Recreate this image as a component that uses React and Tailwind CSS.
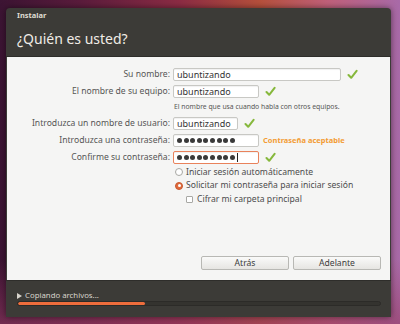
import React from "react";

const Check = () => (
  <svg width="11" height="11" viewBox="0 0 11 11" className="shrink-0">
    <path d="M1.5 6 L4.2 8.8 L9.6 1.8" fill="none" stroke="#86b83c" strokeWidth="2" strokeLinecap="round" strokeLinejoin="round" />
  </svg>
);

const Dots = ({ cursor }) => (
  <div className="flex items-center gap-[1.6px] pl-[3px]">
    {Array.from({ length: 9 }).map((_, i) => (
      <span key={i} className="block w-[5px] h-[5px] rounded-full bg-[#3a3a3a]" />
    ))}
    {cursor && <span className="block w-px h-[9px] bg-[#222] ml-[1px]" />}
  </div>
);

const Field = ({ w, children, active }) => (
  <div
    className={`h-[13px] ${w} rounded-[2px] border bg-white flex items-center ${
      active ? "border-[#e9825b]" : "border-[#c8c8c4]"
    } shadow-[inset_0_1px_1px_rgba(0,0,0,0.06)]`}
  >
    {children}
  </div>
);

const Txt = ({ children }) => (
  <span className="pl-[3px] text-[9px] text-[#333] leading-none">{children}</span>
);

const Row = ({ label, children }) => (
  <div className="flex items-center h-[13px]">
    <div className="w-[166px] pr-[3px] text-right text-[8.6px] text-[#555] leading-none whitespace-nowrap">
      {label}
    </div>
    <div className="flex items-center gap-[6px]">{children}</div>
  </div>
);

export default function App() {
  return (
    <div
      className="relative w-[400px] h-[324px] overflow-hidden bg-[linear-gradient(90deg,#3c1433_0%,#5a1c3c_20%,#8c2c44_45%,#b5503c_65%,#c0607a_82%,#a86aa8_100%)]"
      style={{ fontFamily: '"Noto Sans", "DejaVu Sans", sans-serif' }}
    >
      <div className="absolute inset-0 bg-[linear-gradient(180deg,rgba(0,0,0,0)_0%,rgba(0,0,0,0)_80%,rgba(150,60,100,0.6)_100%)]" />
      <div className="relative ml-[6px] mt-[8px] w-[385px] h-[309px] rounded-t-[4px] bg-[#3c3b37] flex flex-col shadow-[0_0_6px_rgba(0,0,0,0.5)]">
        {/* header */}
        <div className="h-[49px] flex flex-col pl-[11px] border-b border-[#2e2d2a]">
          <div className="pt-[3px] h-[12px] text-[7.5px] font-bold text-[#dfdbd2] leading-none flex items-center">
            Instalar
          </div>
          <div className="mt-[12px] text-[14px] text-[#f0ece6] leading-none">¿Quién es usted?</div>
        </div>
        {/* content */}
        <div className="mx-[1px] h-[223px] bg-[#f5f5f4] flex flex-col pt-[11px]">
          <div className="flex flex-col gap-[4px]">
            <Row label="Su nombre:">
              <Field w="w-[168px]"><Txt>ubuntizando</Txt></Field>
              <Check />
            </Row>
            <div className="flex flex-col">
              <Row label="El nombre de su equipo:">
                <Field w="w-[86px]"><Txt>ubuntizando</Txt></Field>
                <Check />
              </Row>
              <div className="pl-[167px] mt-[3px] h-[12px] text-[6.8px] text-[#555] leading-none flex items-center">
                El nombre que usa cuando habla con otros equipos.
              </div>
            </div>
            <Row label="Introduzca un nombre de usuario:">
              <Field w="w-[65px]"><Txt>ubuntizando</Txt></Field>
              <Check />
            </Row>
            <Row label="Introduzca una contraseña:">
              <Field w="w-[86px]"><Dots /></Field>
              <span className="-ml-[2px] text-[7.5px] font-bold text-[#f39c34] leading-none">Contraseña aceptable</span>
            </Row>
            <Row label="Confirme su contraseña:">
              <Field w="w-[86px]" active><Dots cursor /></Field>
              <Check />
            </Row>
          </div>
          <div className="mt-[3px] pl-[168px] flex flex-col gap-[3.5px] text-[8.6px] text-[#4c4c4c] leading-none">
            <div className="flex items-center gap-[3px] h-[10px]">
              <span className="block w-[8px] h-[8px] rounded-full border border-[#a8a8a4] bg-white" />
              <span>Iniciar sesión automáticamente</span>
            </div>
            <div className="flex items-center gap-[3px] h-[10px]">
              <span className="w-[8px] h-[8px] rounded-full bg-[#e06a3c] border border-[#c85a30] flex items-center justify-center">
                <span className="block w-[3px] h-[3px] rounded-full bg-white" />
              </span>
              <span>Solicitar mi contraseña para iniciar sesión</span>
            </div>
            <div className="flex items-center gap-[4px] h-[10px] pl-[11px]">
              <span className="block w-[7px] h-[7px] rounded-[1px] border border-[#a8a8a4] bg-white" />
              <span>Cifrar mi carpeta principal</span>
            </div>
          </div>
          <div className="mt-auto mb-[10px] flex justify-end gap-[4px] pr-[9px]">
            <div className="w-[88px] h-[14px] rounded-[2px] border border-[#b8b8b4] bg-[linear-gradient(180deg,#fafaf9,#e6e5e2)] text-[8.6px] text-[#3c3c3c] flex items-center justify-center leading-none">
              Atrás
            </div>
            <div className="w-[88px] h-[14px] rounded-[2px] border border-[#b8b8b4] bg-[linear-gradient(180deg,#fafaf9,#e6e5e2)] text-[8.6px] text-[#3c3c3c] flex items-center justify-center leading-none">
              Adelante
            </div>
          </div>
        </div>
        {/* footer */}
        <div className="flex-1 flex flex-col pl-[11px] pr-[10px] pt-[10px] border-t border-[#2e2d2a]">
          <div className="flex items-center gap-[3px] h-[9px] text-[7.8px] text-[#d8d4cc] leading-none">
            <svg width="5" height="6" viewBox="0 0 5 6"><path d="M0 0 L5 3 L0 6 Z" fill="#d8d4cc" /></svg>
            <span>Copiando archivos...</span>
          </div>
          <div className="mt-[1px] h-[5px] rounded-full bg-[#34332f] border border-[#2c2b28] overflow-hidden">
            <div className="h-full w-[35%] rounded-full bg-[#ee6d3c]" />
          </div>
        </div>
      </div>
    </div>
  );
}
